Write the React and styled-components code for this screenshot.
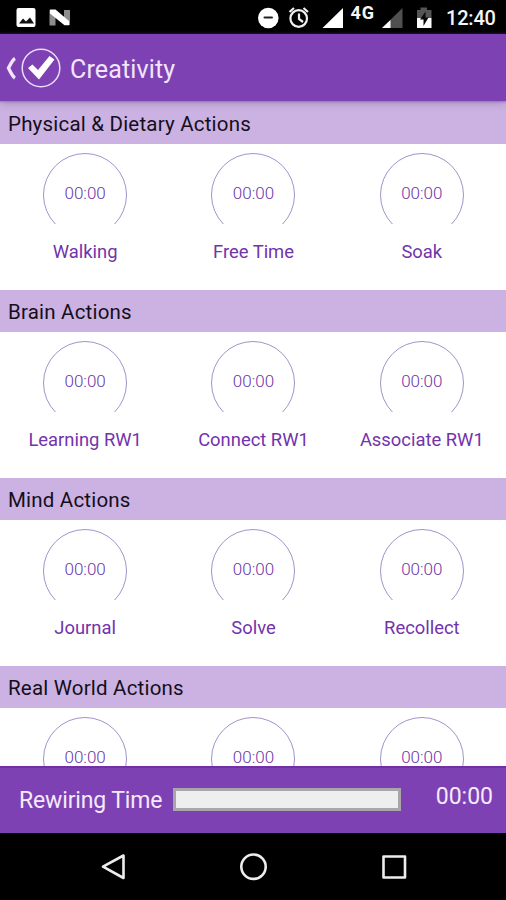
import React from 'react'

import styled, { createGlobalStyle } from 'styled-components'

const GlobalStyle = createGlobalStyle`
    body {
        margin: 0;
        background: #000;
        font-family: Roboto, sans-serif;
    }
`

const Screen = styled.div`
    width: 506px;
    height: 900px;
    display: flex;
    flex-direction: column;
    overflow: hidden;
    background: white;
`

const StatusBar = styled.div`
    height: 34px;
    flex: none;
    background: #000;

    svg {
        display: block;
    }

    text {
        font-family: Roboto, sans-serif;
        font-weight: 500;
        fill: #f5f5f5;
    }
`

const Header = styled.div`
    height: 67px;
    flex: none;
    box-sizing: border-box;
    padding: 2px 0 0 5px;
    display: flex;
    align-items: center;
    background: #7e41b3;
    color: #f1e6fb;
    box-shadow: 0 0 2px 1px rgba(90, 50, 130, 0.35), 0 2px 8px rgba(70, 50, 90, 0.28);
    z-index: 1;
`

const HeaderTitle = styled.div`
    margin: 2px 0 0 9px;
    font-size: 25px;
    letter-spacing: 0.15px;
`

const Content = styled.div`
    flex: 1;
    min-height: 0;
    padding-top: 1px;
    overflow: hidden;
    background: #cbb2e2;
`

const Section = styled.div`
    height: 188px;
    background: white;
`

const SectionTitle = styled.div`
    height: 42px;
    padding-left: 8px;
    line-height: 45px;
    font-size: 20.5px;
    letter-spacing: 0.2px;
    background: #cbb2e2;
    color: #150e1b;
`

const Actions = styled.div`
    display: grid;
    grid-template-columns: repeat(3, 1fr);
    padding: 9px 0 0 1px;
`

const Action = styled.div`
    display: flex;
    flex-direction: column;
    align-items: center;
`

const DialWindow = styled.div`
    height: 71px;
    overflow: hidden;
`

const Dial = styled.div`
    width: 84px;
    height: 84px;
    box-sizing: border-box;
    border: 1px solid #a094ca;
    border-radius: 50%;
    line-height: 79px;
    text-align: center;
    font-size: 17px;
    font-weight: 300;
    color: #6a35a8;
`

const ActionName = styled.div`
    margin-top: 17px;
    line-height: 22px;
    font-size: 18.4px;
    color: #7333ac;
    white-space: nowrap;
`

const Footer = styled.div`
    height: 67px;
    flex: none;
    box-sizing: border-box;
    padding: 0 13px 0 19px;
    display: flex;
    align-items: center;
    border-top: 2px solid #7130a7;
    background: #7e41b3;
    color: #f4eafc;
    font-size: 23px;
    z-index: 1;
`

const FooterLabel = styled.div`
    width: 154px;
    letter-spacing: -0.15px;
    white-space: nowrap;
`

const Progress = styled.div`
    width: 228px;
    height: 23px;
    margin-top: -3px;
    box-sizing: border-box;
    border: 3px solid #a9a6aa;
    background: #efeeef;
`

const FooterTime = styled.div`
    margin: -8px 0 0 auto;
`

const NavBar = styled.div`
    height: 67px;
    flex: none;
    display: flex;
    background: #000;
`

const StatusIcons = () => (
    <svg width="506" height="34" viewBox="0 0 506 34">
        <rect x="16.5" y="8" width="19" height="19" rx="2" fill="#fff" />
        <path d="M19 23.5l4-5 3 3 4-4 4 6z" fill="#111" />
        <path d="M49.5 10v15.500h6V10zM64 10v15h6V10z" fill="#8d8d8d" />
        <path d="M50 9.500h5.500L69 21v4.200h-4.500L50 13.500z" fill="#fff" />
        <circle cx="268.300" cy="18" r="10.300" fill="#fff" />
        <rect x="263.500" y="16.500" width="9.500" height="2" rx="1" fill="#222" />
        <g fill="none" stroke="#f1f1f1" strokeWidth="2.200">
            <circle cx="298.700" cy="18.500" r="8.300" />
            <path d="M299 13.500v5.500l4 3M289.500 12l4.500-4M308 12l-4.500-4" />
        </g>
        <path d="M343 8v20h-20.500z" fill="#fff" />
        <text x="350.500" y="18.500" fontSize="18" letterSpacing="0.8" style={{ fontWeight: 700 }}>
            4G
        </text>
        <path d="M402.500 8v20H382z" fill="#505050" />
        <path d="M390.500 20v8H382z" fill="#fff" />
        <path d="M417 10h3.500V7.500h6.500V10h4.500v8H417z" fill="#555" />
        <path d="M417 18h14.500v10H417z" fill="#fff" />
        <path d="M425.500 11.500l-5.500 8h3.500V26l5-8.500h-3z" fill="#090909" />
        <text x="446" y="25" fontSize="20" letterSpacing="-0.2">
            12:40
        </text>
    </svg>
)

const HeaderIcons = () => (
    <svg width="56" height="42" viewBox="0 0 56 42">
        <path
            d="M10 10.500Q7.500 12 3.500 20Q7.500 28.500 10 30"
            fill="none"
            stroke="#f1e6fb"
            strokeWidth="3.400"
        />
        <circle cx="36" cy="20" r="18.800" fill="none" stroke="#eadcf7" strokeWidth="1.500" />
        <path d="M23 20l4.500-3.500 5.500 5.500L44.500 8l5 3.500L34 31.500z" fill="#fff" />
    </svg>
)

const NavIcons = () => (
    <svg width="506" height="67" viewBox="0 0 506 67">
        <g fill="none" stroke="#ededed" strokeWidth="2.600" strokeLinejoin="round">
            <path d="M123.500 22.500v22.500L103 33.700z" />
            <circle cx="253.500" cy="33.700" r="12.200" />
            <rect x="383.500" y="23.500" width="21.500" height="21" />
        </g>
    </svg>
)

const sections = [
    { title: 'Physical & Dietary Actions', actions: ['Walking', 'Free Time', 'Soak'] },
    { title: 'Brain Actions', actions: ['Learning RW1', 'Connect RW1', 'Associate RW1'] },
    { title: 'Mind Actions', actions: ['Journal', 'Solve', 'Recollect'] },
    { title: 'Real World Actions', actions: ['', '', ''] }
]

const App = () => (
    <>
        <GlobalStyle />
        <Screen>
            <StatusBar>
                <StatusIcons />
            </StatusBar>
            <Header>
                <HeaderIcons />
                <HeaderTitle>Creativity</HeaderTitle>
            </Header>
            <Content>
                {sections.map(({ title, actions }) => (
                    <Section key={title}>
                        <SectionTitle>{title}</SectionTitle>
                        <Actions>
                            {actions.map((name, index) => (
                                <Action key={index}>
                                    <DialWindow>
                                        <Dial>00:00</Dial>
                                    </DialWindow>
                                    <ActionName>{name}</ActionName>
                                </Action>
                            ))}
                        </Actions>
                    </Section>
                ))}
            </Content>
            <Footer>
                <FooterLabel>Rewiring Time</FooterLabel>
                <Progress />
                <FooterTime>00:00</FooterTime>
            </Footer>
            <NavBar>
                <NavIcons />
            </NavBar>
        </Screen>
    </>
)

export default App
